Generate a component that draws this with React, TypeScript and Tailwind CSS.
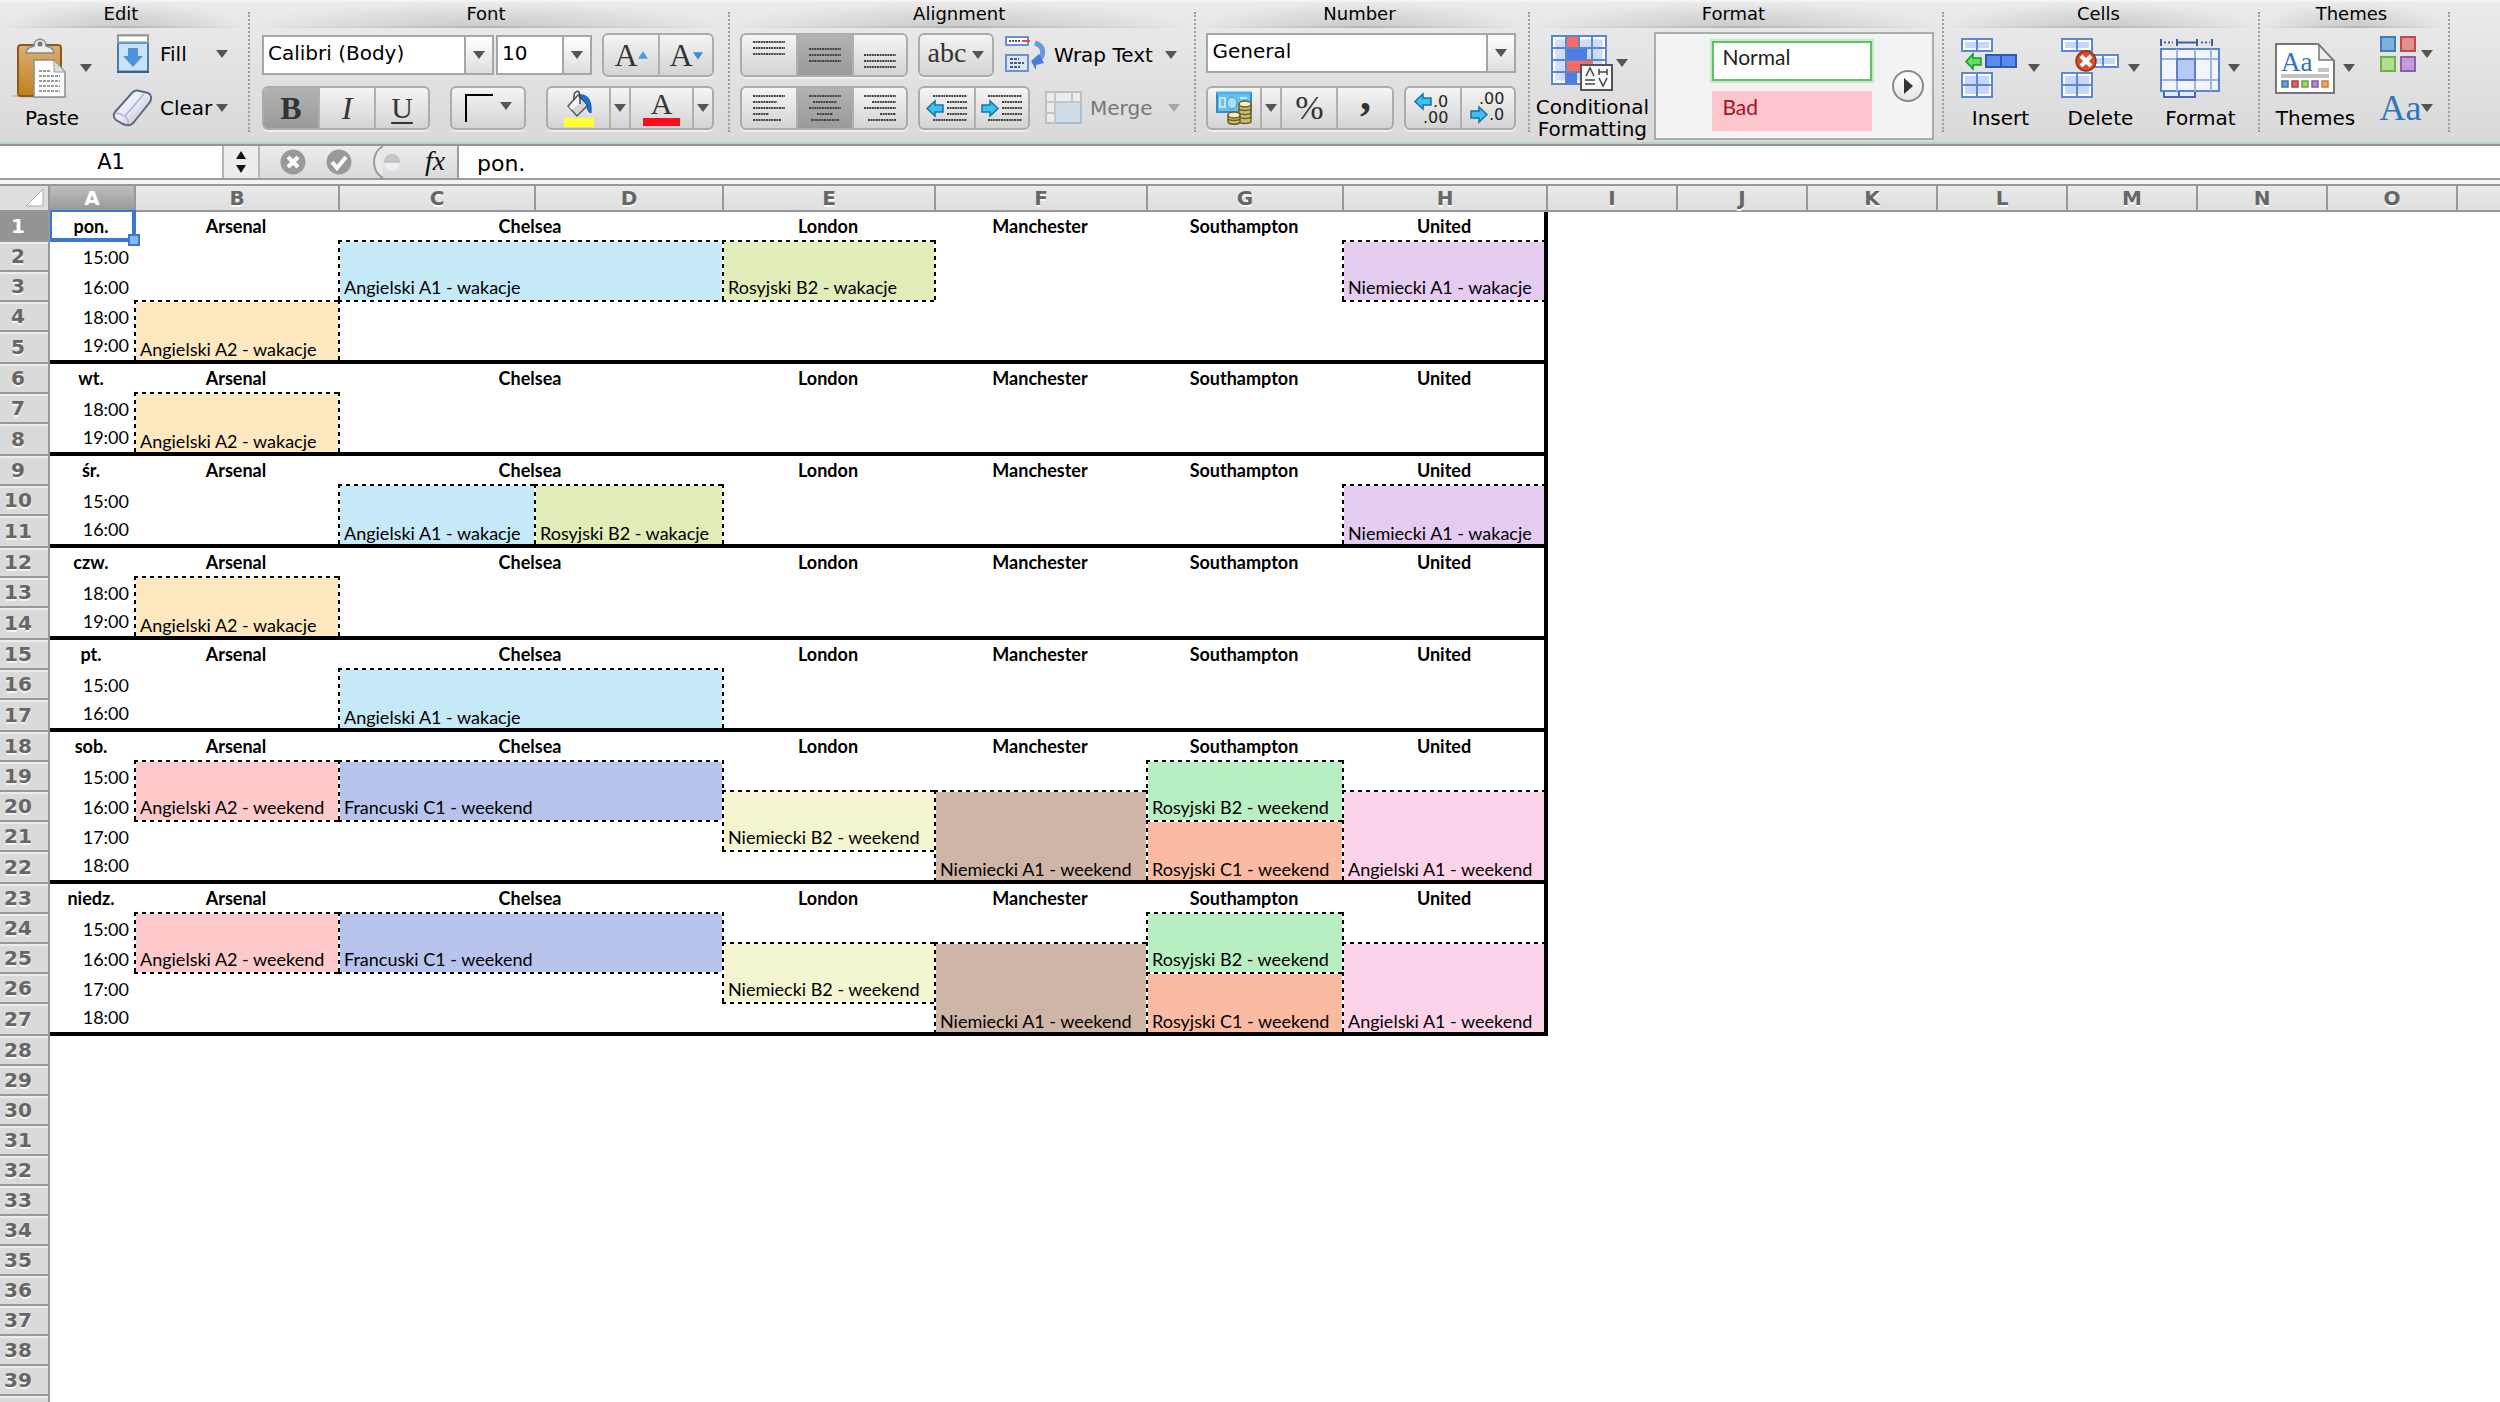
import type { ReactNode } from "react";
import clsx from "clsx";

type Course = {
  row: number;
  span: number;
  col: number;
  colSpan?: number;
  text: string;
  color: string;
};

type Day = {
  name: string;
  times: string[];
  courses: Course[];
};

const CYAN = "bg-[#c6e9f8]";
const LIME = "bg-[#e0edb8]";
const VIOLET = "bg-[#e4ccf1]";
const SAND = "bg-[#fde8c0]";
const ROSE = "bg-[#fdc9cb]";
const INDIGO = "bg-[#b8c3ec]";
const CREAM = "bg-[#f5f5d2]";
const BROWN = "bg-[#ceb5a6]";
const MINT = "bg-[#b7efc0]";
const CORAL = "bg-[#fbbaa2]";
const PINK = "bg-[#fdd3ea]";

const weekend: Course[] = [
  { row: 0, span: 2, col: 1, text: "Angielski A2 - weekend", color: ROSE },
  { row: 0, span: 2, col: 2, colSpan: 2, text: "Francuski C1 - weekend", color: INDIGO },
  { row: 1, span: 2, col: 4, text: "Niemiecki B2 - weekend", color: CREAM },
  { row: 1, span: 3, col: 5, text: "Niemiecki A1 - weekend", color: BROWN },
  { row: 0, span: 2, col: 6, text: "Rosyjski B2 - weekend", color: MINT },
  { row: 2, span: 2, col: 6, text: "Rosyjski C1 - weekend", color: CORAL },
  { row: 1, span: 3, col: 7, text: "Angielski A1 - weekend", color: PINK },
];

const days: Day[] = [
  {
    name: "pon.",
    times: ["15:00", "16:00", "18:00", "19:00"],
    courses: [
      { row: 0, span: 2, col: 2, colSpan: 2, text: "Angielski A1 - wakacje", color: CYAN },
      { row: 0, span: 2, col: 4, text: "Rosyjski B2 - wakacje", color: LIME },
      { row: 0, span: 2, col: 7, text: "Niemiecki A1 - wakacje", color: VIOLET },
      { row: 2, span: 2, col: 1, text: "Angielski A2 - wakacje", color: SAND },
    ],
  },
  {
    name: "wt.",
    times: ["18:00", "19:00"],
    courses: [{ row: 0, span: 2, col: 1, text: "Angielski A2 - wakacje", color: SAND }],
  },
  {
    name: "śr.",
    times: ["15:00", "16:00"],
    courses: [
      { row: 0, span: 2, col: 2, text: "Angielski A1 - wakacje", color: CYAN },
      { row: 0, span: 2, col: 3, text: "Rosyjski B2 - wakacje", color: LIME },
      { row: 0, span: 2, col: 7, text: "Niemiecki A1 - wakacje", color: VIOLET },
    ],
  },
  {
    name: "czw.",
    times: ["18:00", "19:00"],
    courses: [{ row: 0, span: 2, col: 1, text: "Angielski A2 - wakacje", color: SAND }],
  },
  {
    name: "pt.",
    times: ["15:00", "16:00"],
    courses: [{ row: 0, span: 2, col: 2, colSpan: 2, text: "Angielski A1 - wakacje", color: CYAN }],
  },
  { name: "sob.", times: ["15:00", "16:00", "17:00", "18:00"], courses: weekend },
  { name: "niedz.", times: ["15:00", "16:00", "17:00", "18:00"], courses: weekend },
];

const columns = [
  { letter: "A", width: "w-[86px]" },
  { letter: "B", width: "w-[204px]" },
  { letter: "C", width: "w-[196px]" },
  { letter: "D", width: "w-[188px]" },
  { letter: "E", width: "w-[212px]" },
  { letter: "F", width: "w-[212px]" },
  { letter: "G", width: "w-[196px]" },
  { letter: "H", width: "w-[204px]" },
  { letter: "I", width: "w-[130px]" },
  { letter: "J", width: "w-[130px]" },
  { letter: "K", width: "w-[130px]" },
  { letter: "L", width: "w-[130px]" },
  { letter: "M", width: "w-[130px]" },
  { letter: "N", width: "w-[130px]" },
  { letter: "O", width: "w-[130px]" },
];

const rooms = ["Arsenal", "Chelsea", "London", "Manchester", "Southampton", "United"];

/* ---------- ribbon pieces ---------- */

function Caret({ faded = false }: { faded?: boolean }) {
  return (
    <svg width="12" height="8" viewBox="0 0 12 8" className={clsx("shrink-0", faded && "opacity-40")}>
      <path d="M0 0h12L6 8z" fill="#555" />
    </svg>
  );
}

function Separator() {
  return <div className="my-2.5 w-0 shrink-0 border-l-2 border-dotted border-[#9d9d9d]" />;
}

function Group({ title, className, children }: { title: string; className?: string; children: ReactNode }) {
  return (
    <section className="flex shrink-0 flex-col" aria-label={title}>
      <h2 className="h-6 bg-[radial-gradient(ellipse_at_bottom,#cbcbcb,transparent_70%)] pr-1.5 text-center text-lg leading-6">
        {title}
      </h2>
      <div className="h-0.5 bg-linear-to-r from-transparent via-[#b4b4b4] to-transparent" />
      <div className={clsx("flex", className)}>{children}</div>
    </section>
  );
}

function Segments({ children }: { children: ReactNode }) {
  return (
    <div className="flex h-11 shrink-0 rounded-md border-2 border-[#acacac] bg-linear-to-b from-[#f5f5f5] to-[#d3d3d3] shadow-[0_2px_0_#eeeeee]">
      {children}
    </div>
  );
}

function Segment({
  label,
  width,
  active = false,
  children,
}: {
  label: string;
  width: string;
  active?: boolean;
  children: ReactNode;
}) {
  return (
    <button
      type="button"
      aria-label={label}
      aria-pressed={active}
      className={clsx(
        "flex items-center justify-center border-l-2 border-[#b0b0b0] font-['Liberation_Serif',serif] text-[#333] first:rounded-l-sm first:border-l-0",
        active && "bg-linear-to-b from-[#b2b2b2] to-[#9a9a9a]",
        width,
      )}
    >
      {children}
    </button>
  );
}

function Combo({ label, value, width }: { label: string; value: string; width: string }) {
  return (
    <div className={clsx("relative h-10 shrink-0 border-2 border-[#a6a6a6] bg-white", width)}>
      <select aria-label={label} className="h-full w-full appearance-none pb-1 pl-1 text-xl outline-none">
        <option>{value}</option>
      </select>
      <span className="pointer-events-none absolute inset-y-0 right-0 flex w-7 items-center justify-center border-l-2 border-[#a6a6a6] bg-linear-to-b from-white to-[#dedede]">
        <Caret />
      </span>
    </div>
  );
}

function BigButton({ label, children }: { label: string; children: ReactNode }) {
  return (
    <button type="button" className="flex w-20 flex-col items-center gap-1.5 pt-2 text-xl leading-6">
      <span className="flex h-16 w-full items-center justify-between">
        {children}
        <Caret />
      </span>
      {label}
    </button>
  );
}

// Horizontal strokes as [x, y, length]
function Lines({ lines }: { lines: number[][] }) {
  return (
    <svg width="40" height="36" viewBox="0 0 40 36" stroke="#444" strokeWidth="2" strokeDasharray="2 0.6">
      {lines.map(([x, y, len]) => (
        <path key={`${x}-${y}`} d={`M${x} ${y}h${len}`} />
      ))}
    </svg>
  );
}

const ARROW_LEFT = "M0 7.500L8 0v4h8v7H8v4z";
const ARROW_RIGHT = "M16 7.500L8 0v4H0v7h8v4z";

function BlueArrow({ d, x, y }: { d: string; x: number; y: number }) {
  return <path d={d} transform={`translate(${x} ${y})`} fill="#3dc1f3" stroke="#1374a6" strokeWidth="1.500" />;
}

function PasteIcon() {
  return (
    <svg width="56" height="64" viewBox="0 0 56 64">
      <defs>
        <linearGradient id="board" x1="0" y1="0" x2="0" y2="1">
          <stop offset="0" stopColor="#dcae78" />
          <stop offset="1" stopColor="#bd8216" />
        </linearGradient>
      </defs>
      <ellipse cx="28" cy="60" rx="28" ry="2" fill="#aaa" opacity="0.6" />
      <rect x="6" y="9" width="43" height="51" rx="3" fill="url(#board)" stroke="#8a5a1c" strokeWidth="2" />
      <path d="M14 17c0-4 4-6 8-7 0-9 12-9 12 0 4 1 8 3 8 7z" fill="#eee" stroke="#888" strokeWidth="1.500" />
      <circle cx="28" cy="8" r="2.500" fill="#777" />
      <path d="M22 24h20l11 12v25H22z" fill="#fff" stroke="#8c8c8c" strokeWidth="1.500" />
      <path d="M42 24v12h11z" fill="#ddd" stroke="#999" />
      <path d="M27 35h11M27 40h21M27 45h21M27 50h21M27 55h21" stroke="#9a9a9a" strokeWidth="2" strokeDasharray="3 1" />
    </svg>
  );
}

function FillIcon() {
  return (
    <svg width="40" height="40" viewBox="0 0 40 40">
      <rect x="6" y="1.500" width="30" height="36" fill="#c9e2f8" stroke="#4a7cab" strokeWidth="2" />
      <path d="M6 1.500h30v7H6z" fill="#fff" stroke="#999" strokeWidth="2" />
      <path d="M7 9h28" stroke="#5b9bd2" strokeWidth="2" />
      <path d="M16 14h10v8h5L21 33 11 22h5z" fill="#4d95da" />
      <path d="M5 38h32" stroke="#35618a" strokeWidth="2" />
    </svg>
  );
}

function EraserIcon() {
  return (
    <svg width="40" height="40" viewBox="0 0 40 40">
      <defs>
        <linearGradient id="eraser" x1="0" y1="0" x2="1" y2="1">
          <stop offset="0" stopColor="#fff" />
          <stop offset="0.500" stopColor="#e6e9f5" />
          <stop offset="1" stopColor="#a9b3d2" />
        </linearGradient>
      </defs>
      <path
        d="M3 24 20 5c2-3 5-3 8-2l8 2c3 1 4 5 2 9L22 34c-3 4-7 4-11 2l-7-4c-2-2-3-5-1-8z"
        fill="url(#eraser)"
        stroke="#5d6880"
        strokeWidth="2"
      />
      <path d="M3 26c3-2 6 0 9 2s5 4 4 8M13 28 32 6" fill="none" stroke="#aab3cc" strokeWidth="1.500" />
    </svg>
  );
}

function BucketIcon() {
  return (
    <svg width="30" height="38" viewBox="0 0 30 38">
      <path d="M4 17 14 6l10 10-11 11z" fill="#d5d5d5" stroke="#555" strokeWidth="1.500" />
      <path d="M5 18 14 8l4 4-10 9z" fill="#f7f7f7" />
      <path d="M10 11c-1-10 6-12 6-3v7" fill="none" stroke="#444" strokeWidth="1.500" />
      <path d="M15 6c8-1 13 4 12 18-3-1-4-4-4-8z" fill="#1f6fd0" stroke="#124a94" />
      <rect x="0" y="29" width="30" height="9" fill="#ffff33" />
    </svg>
  );
}

function WrapIcon() {
  return (
    <svg width="42" height="40" viewBox="0 0 42 40">
      <rect x="2" y="2" width="22" height="8" fill="#fff" stroke="#6e8fc9" strokeWidth="2" />
      <path d="M5 6h12" stroke="#555" strokeWidth="2" strokeDasharray="2 1" />
      <path d="M18 6h8" stroke="#f2413a" strokeWidth="2" />
      <rect x="2" y="20" width="22" height="16" fill="#d9e5f8" stroke="#6e8fc9" strokeWidth="2" />
      <path d="M6 24h9M6 28h14M6 32h10" stroke="#4a5a80" strokeWidth="2" strokeDasharray="3 1" />
      <path d="M31 8c10 3 9 12 4 17" fill="none" stroke="#6a97e0" strokeWidth="5" />
      <path d="M27 26l8-7 5 9-8 2v5z" fill="#4a7bd6" />
    </svg>
  );
}

function MergeIcon() {
  return (
    <svg width="40" height="36" viewBox="0 0 40 36" strokeWidth="2">
      <path d="M2 2h35v31H2z" fill="#ececec" stroke="#bfbfbf" />
      <path d="M11 12h26v21H11z" fill="#cfdde9" stroke="#a8c0d4" />
      <path d="M2 12h35M11 2v31M28 2v10M2 23h9" stroke="#c6c6c6" fill="none" />
    </svg>
  );
}

function CurrencyIcon() {
  return (
    <svg width="38" height="36" viewBox="0 0 38 36">
      <rect x="2" y="3" width="34" height="19" fill="#6cc1ea" stroke="#2f8fc6" strokeWidth="2" />
      <path d="M2 3h34" stroke="#4cb2f2" strokeWidth="3" />
      <ellipse cx="17" cy="13" rx="5" ry="6" fill="#a9def5" stroke="#3b93c0" />
      <path d="M5 8h5v9H5zM25 8h7" fill="none" stroke="#d6f0fb" strokeWidth="1.500" />
      <g fill="#cbbb73" stroke="#6e5f26" strokeWidth="1.500">
        <path d="M24 14v18c2 2 10 2 12 0V14z" />
        <ellipse cx="30" cy="14" rx="6" ry="3" fill="#f7efc4" />
        <path d="M24 19c2 2 10 2 12 0M24 23c2 2 10 2 12 0M24 27c2 2 10 2 12 0" fill="none" />
        <path d="M13 25v7c2 3 10 3 12 0v-7z" />
        <ellipse cx="19" cy="25" rx="6" ry="3" fill="#f7efc4" />
        <path d="M13 29c2 2 10 2 12 0" fill="none" />
      </g>
    </svg>
  );
}

function ConditionalIcon() {
  return (
    <svg width="64" height="58" viewBox="0 0 64 58">
      <rect x="2" y="2" width="54" height="48" fill="#cfdcf7" />
      <path d="M4 4h50v44H4z" fill="none" stroke="#fff" strokeWidth="3" />
      <rect x="16" y="2" width="13" height="12" fill="#fa6a60" />
      <rect x="16" y="14" width="21" height="12" fill="#4f7ce3" />
      <rect x="16" y="26" width="27" height="12" fill="#fa6a60" />
      <rect x="16" y="38" width="11" height="12" fill="#4f7ce3" />
      <path d="M2 14h54M2 26h54M2 38h54M16 2v48M29 2v12M42 2v24" stroke="#5886d0" strokeWidth="2" />
      <rect x="2" y="2" width="54" height="48" fill="none" stroke="#5886d0" strokeWidth="2" />
      <rect x="31" y="31" width="31" height="25" fill="#f8f8f8" stroke="#555" strokeWidth="2" />
      <path
        d="m36 42 4-8 4 8M35 46h10M35 50h10M49 35v6M57 35v6M49 38h8M49 44l4 8 4-8"
        fill="none"
        stroke="#444"
        strokeWidth="1.500"
      />
    </svg>
  );
}

function CellPair({ x, y, dark = false, rows = 1 }: { x: number; y: number; dark?: boolean; rows?: number }) {
  const h = rows * 12;
  return (
    <g stroke={dark ? "#2f59b5" : "#5b88d2"} strokeWidth="2">
      <rect x={x} y={y} width="30" height={h} fill={dark ? "#5c8bf0" : "#fff"} />
      {!dark && <rect x={x + 3} y={y + 3} width="24" height={h - 6} fill="#c6d7f8" stroke="none" />}
      <path d={`M${x + 15} ${y}v${h}${rows > 1 ? `M${x} ${y + 12}h30` : ""}`} />
    </g>
  );
}

function InsertIcon() {
  return (
    <svg width="60" height="64" viewBox="0 0 60 64">
      <CellPair x={2} y={3} />
      <CellPair x={26} y={19} dark />
      <CellPair x={2} y={37} rows={2} />
      <path d="M6 25.500 13 18v4h8v7h-8v4z" fill="#5fe065" stroke="#13992a" strokeWidth="1.500" />
    </svg>
  );
}

function DeleteIcon() {
  return (
    <svg width="60" height="64" viewBox="0 0 60 64">
      <CellPair x={2} y={3} />
      <CellPair x={28} y={19} />
      <CellPair x={2} y={37} rows={2} />
      <circle cx="26" cy="25" r="10" fill="#d4502a" stroke="#97300f" strokeWidth="1.500" />
      <path d="m21 20 10 10m0-10L21 30" stroke="#fff" strokeWidth="4" />
    </svg>
  );
}

function FormatIcon() {
  return (
    <svg width="60" height="64" viewBox="0 0 60 64">
      <path d="M1 3v7M52 3v7M17 3v7M37 3v7M16 6.500h22" stroke="#3d5f9f" strokeWidth="2" />
      <path d="M4 6.500h9M41 6.500h9" stroke="#3d5f9f" strokeWidth="2" strokeDasharray="2 2" />
      <path d="M4 54v7h15v-7M19 54v7h16v-7" fill="#e4ebf8" stroke="#4a69a8" strokeWidth="2" />
      <rect x="1" y="13" width="58" height="42" fill="#f2f5fd" stroke="#5d83cf" strokeWidth="2" />
      <rect x="18" y="24" width="17" height="20" fill="#b5c9f3" />
      <path d="M2 23h56M2 44h56M17 13v42M35 13v42M51 13v42" stroke="#9fb4de" strokeWidth="2" />
      <path d="M17 23h18v21H17z" fill="none" stroke="#5d80c6" strokeWidth="2" />
    </svg>
  );
}

function ThemesIcon() {
  return (
    <svg width="60" height="64" viewBox="0 0 60 64">
      <path d="M1 8h42l16 17v32H1z" fill="#fff" stroke="#777" strokeWidth="2" />
      <path d="M44 9v15h14z" fill="#eee" stroke="#777" strokeWidth="1.500" />
      <text x="6" y="35" fontSize="27" fill="#2f75bd" fontFamily="'Liberation Serif', serif">
        Aa
      </text>
      <path d="M43 34h11M6 40h48" stroke="#c4c4c4" strokeWidth="4" />
      <g strokeWidth="1.500">
        <path d="M7 45h6v6H7z" fill="#6aa2d6" stroke="#3a75ad" />
        <path d="M17 45h6v6h-6z" fill="#dd6667" stroke="#b83c40" />
        <path d="M27 45h6v6h-6z" fill="#a0d37c" stroke="#67a83e" />
        <path d="M37 45h6v6h-6z" fill="#b98bd0" stroke="#8b55a8" />
        <path d="M47 45h6v6h-6z" fill="#f0a56a" stroke="#cf7a36" />
      </g>
    </svg>
  );
}

function SwatchIcon() {
  return (
    <svg width="38" height="38" viewBox="0 0 38 38" strokeWidth="2">
      <path d="M2 2h14v14H2z" fill="#7db0de" stroke="#3f7db5" />
      <path d="M22 2h14v14H22z" fill="#e58e90" stroke="#bf4a4e" />
      <path d="M2 22h14v14H2z" fill="#b2de93" stroke="#6fae48" />
      <path d="M22 22h14v14H22z" fill="#c29fd8" stroke="#8f5cae" />
    </svg>
  );
}

function Ribbon() {
  return (
    <header className="flex h-[142px] overflow-hidden border-t-2 border-[#f3f3f3] bg-linear-to-b from-[#ebebeb] to-[#d9d9d9]">
      <Group title="Edit" className="pr-5 pl-3">
        <BigButton label="Paste">
          <PasteIcon />
        </BigButton>
        <div className="ml-5 flex flex-col gap-3.5 pt-1.5">
          <button type="button" className="flex h-10 items-center text-xl">
            <FillIcon />
            <span className="w-16 pl-2 text-left">Fill</span>
            <Caret />
          </button>
          <button type="button" className="flex h-10 items-center text-xl">
            <EraserIcon />
            <span className="w-16 pl-2 text-left">Clear</span>
            <Caret />
          </button>
        </div>
      </Group>
      <Separator />

      <Group title="Font" className="flex-col gap-[9px] pt-[5px] pr-3.5 pl-3">
        <div className="flex items-center">
          <Combo label="Font" value="Calibri (Body)" width="w-[232px]" />
          <div className="mr-2.5 ml-0.5">
            <Combo label="Font size" value="10" width="w-24" />
          </div>
          <Segments>
            <Segment label="Increase font size" width="w-[54px]">
              <span className="text-[32px] leading-8">A</span>
              <svg width="10" height="9" viewBox="0 0 12 10">
                <path d="M6 0l6 9H0z" fill="#4d9ce0" />
              </svg>
            </Segment>
            <Segment label="Decrease font size" width="w-[54px]">
              <span className="text-[32px] leading-8">A</span>
              <svg width="10" height="9" viewBox="0 0 12 10">
                <path d="M6 10l6-9H0z" fill="#3b8bdc" />
              </svg>
            </Segment>
          </Segments>
        </div>
        <div className="flex justify-between">
          <Segments>
            <Segment label="Bold" width="w-[54px]" active>
              <span className="text-[32px] leading-8 font-bold">B</span>
            </Segment>
            <Segment label="Italic" width="w-14">
              <span className="text-[32px] leading-8 italic">I</span>
            </Segment>
            <Segment label="Underline" width="w-[54px]">
              <span className="text-3xl leading-8 underline decoration-2 underline-offset-4">U</span>
            </Segment>
          </Segments>
          <Segments>
            <Segment label="Borders" width="w-[72px]">
              <svg width="48" height="30" viewBox="0 0 48 30">
                <path d="M2 29V2h27" fill="none" stroke="#000" strokeWidth="2" />
                <path d="M36 9h12l-6 8z" fill="#555" />
              </svg>
            </Segment>
          </Segments>
          <Segments>
            <Segment label="Fill color" width="w-[61px]">
              <BucketIcon />
            </Segment>
            <Segment label="Fill color menu" width="w-5">
              <Caret />
            </Segment>
            <Segment label="Font color" width="w-[63px]">
              <span className="border-b-8 border-[#fc0d1b] px-2 text-3xl leading-7">A</span>
            </Segment>
            <Segment label="Font color menu" width="w-5">
              <Caret />
            </Segment>
          </Segments>
        </div>
      </Group>
      <Separator />

      <Group title="Alignment" className="flex-col gap-[9px] pt-[5px] pr-3.5 pl-2.5">
        <div className="flex items-center gap-2.5">
          <Segments>
            <Segment label="Align top" width="w-[54px]">
              <Lines lines={[[4, 5, 32], [4, 11, 32], [4, 17, 32]]} />
            </Segment>
            <Segment label="Align middle" width="w-14" active>
              <Lines lines={[[4, 12, 32], [4, 18, 32], [4, 24, 32]]} />
            </Segment>
            <Segment label="Align bottom" width="w-[54px]">
              <Lines lines={[[4, 18, 32], [4, 24, 32], [4, 30, 32]]} />
            </Segment>
          </Segments>
          <Segments>
            <Segment label="Orientation" width="w-[72px]">
              <span className="mr-1.5 pb-1 text-[28px] leading-8">abc</span>
              <Caret />
            </Segment>
          </Segments>
          <button type="button" className="flex items-center text-xl">
            <WrapIcon />
            <span className="mr-3 ml-2">Wrap Text</span>
            <Caret />
          </button>
        </div>
        <div className="flex items-center gap-2.5">
          <Segments>
            <Segment label="Align left" width="w-[54px]">
              <Lines lines={[[4, 6, 32], [4, 12, 24], [4, 18, 32], [4, 24, 16], [4, 30, 28]]} />
            </Segment>
            <Segment label="Align center" width="w-14" active>
              <Lines lines={[[4, 6, 32], [8, 12, 24], [4, 18, 32], [12, 24, 16], [6, 30, 28]]} />
            </Segment>
            <Segment label="Align right" width="w-[54px]">
              <Lines lines={[[4, 6, 32], [12, 12, 24], [4, 18, 32], [20, 24, 16], [8, 30, 28]]} />
            </Segment>
          </Segments>
          <Segments>
            <Segment label="Decrease indent" width="w-[54px]">
              <svg width="42" height="36" viewBox="0 0 42 36">
                <path d="M7 6h34M21 12h20M21 18h20M21 24h20M7 30h34" stroke="#444" strokeWidth="2" strokeDasharray="2 0.6" />
                <BlueArrow d={ARROW_LEFT} x={1} y={11} />
              </svg>
            </Segment>
            <Segment label="Increase indent" width="w-[54px]">
              <svg width="42" height="36" viewBox="0 0 42 36">
                <path d="M7 6h34M21 12h20M21 18h20M21 24h20M7 30h34" stroke="#444" strokeWidth="2" strokeDasharray="2 0.6" />
                <BlueArrow d={ARROW_RIGHT} x={1} y={11} />
              </svg>
            </Segment>
          </Segments>
          <button type="button" className="flex items-center pl-1 text-xl text-[#777]">
            <MergeIcon />
            <span className="mr-4 ml-1.5">Merge</span>
            <Caret faded />
          </button>
        </div>
      </Group>
      <Separator />

      <Group title="Number" className="flex-col gap-[9px] pt-[5px] pr-3 pl-2.5">
        <div className="flex h-11">
          <Combo label="Number format" value="General" width="w-[310px]" />
        </div>
        <div className="flex gap-2.5">
          <Segments>
            <Segment label="Currency" width="w-[52px]">
              <CurrencyIcon />
            </Segment>
            <Segment label="Currency menu" width="w-5">
              <Caret />
            </Segment>
            <Segment label="Percent style" width="w-14">
              <span className="text-[34px] leading-8">%</span>
            </Segment>
            <Segment label="Comma style" width="w-14">
              <span className="h-10 text-[44px] leading-4 font-bold">,</span>
            </Segment>
          </Segments>
          <Segments>
            <Segment label="Increase decimal" width="w-[54px]">
              <svg
                width="42"
                height="38"
                viewBox="0 0 42 38"
                className="overflow-visible"
                fontFamily="'DejaVu Sans', sans-serif"
                fontSize="16"
                fill="#222"
              >
                <BlueArrow d={ARROW_LEFT} x={3} y={5} />
                <text x="21" y="18">.0</text>
                <text x="11" y="34">.00</text>
              </svg>
            </Segment>
            <Segment label="Decrease decimal" width="w-[54px]">
              <svg
                width="42"
                height="38"
                viewBox="0 0 42 38"
                className="overflow-visible"
                fontFamily="'DejaVu Sans', sans-serif"
                fontSize="16"
                fill="#222"
              >
                <text x="12" y="15">.00</text>
                <text x="22" y="31">.0</text>
                <BlueArrow d={ARROW_RIGHT} x={4} y={18} />
              </svg>
            </Segment>
          </Segments>
        </div>
      </Group>
      <Separator />

      <Group title="Format" className="pr-2 pl-1.5">
        <button type="button" className="flex w-28 flex-col items-center pt-1.5 text-xl leading-[22px]">
          <span className="flex w-full items-center gap-0.5 pl-3.5">
            <ConditionalIcon />
            <Caret />
          </span>
          <span className="pt-1">
            Conditional
            <br />
            Formatting
          </span>
        </button>
        <div className="mt-1 ml-1.5 flex h-[108px] w-[280px] items-center border-2 border-[#acacac] bg-[#f3f3f3] font-[Lato,sans-serif] text-[21px]">
          <div className="ml-14 flex w-40 flex-col gap-2.5">
            <button
              type="button"
              className="h-10 border-2 border-[#5fc068] bg-white pb-2 pl-2 text-left leading-7 text-[#222] shadow-[0_0_0_2px_#c3ecc4]"
            >
              Normal
            </button>
            <button type="button" className="h-10 bg-[#fec6ce] pb-2 pl-2.5 text-left leading-7 text-[#a31420]">
              Bad
            </button>
          </div>
          <button
            type="button"
            aria-label="More styles"
            className="ml-5 flex size-8 items-center justify-center rounded-full border-2 border-[#888] bg-linear-to-b from-white to-[#e6e6e6]"
          >
            <svg width="9" height="16" viewBox="0 0 9 16">
              <path d="M0 0l9 8-9 8z" fill="#333" />
            </svg>
          </button>
        </div>
      </Group>
      <Separator />

      <Group title="Cells" className="gap-5 pr-[18px] pl-4">
        <BigButton label="Insert">
          <InsertIcon />
        </BigButton>
        <BigButton label="Delete">
          <DeleteIcon />
        </BigButton>
        <BigButton label="Format">
          <FormatIcon />
        </BigButton>
      </Group>
      <Separator />

      <Group title="Themes" className="gap-6 px-[15px]">
        <BigButton label="Themes">
          <ThemesIcon />
        </BigButton>
        <div className="flex flex-col gap-3.5 pt-1.5">
          <button type="button" aria-label="Theme colors" className="flex h-10 items-center gap-1">
            <SwatchIcon />
            <Caret />
          </button>
          <button
            type="button"
            aria-label="Theme fonts"
            className="flex h-10 items-center gap-1 font-['Liberation_Serif',serif] text-4xl text-[#2f75bd]"
          >
            <span className="w-[38px]">Aa</span>
            <Caret />
          </button>
        </div>
      </Group>
      <Separator />
    </header>
  );
}

function FormulaBar() {
  return (
    <div className="flex h-10 border-t-2 border-b-4 border-t-[#969696] border-b-[#f4f4f4]">
      <div className="flex flex-1 border-b-2 border-[#9c9c9c] bg-linear-to-b from-[#ececec] to-[#dadada]">
        <input
          aria-label="Name box"
          defaultValue="A1"
          className="w-[222px] bg-white pt-0.5 text-center text-[21px] outline-none"
        />
        <button
          type="button"
          aria-label="Name box menu"
          className="flex w-[38px] items-center justify-center border-x-2 border-[#b5b5b5] bg-[#ededed]"
        >
          <svg width="10" height="22" viewBox="0 0 10 22" fill="#111">
            <path d="M5 0l5 8H0zM5 22l5-8H0z" />
          </svg>
        </button>
        <div className="flex w-[199px] items-center border-r-2 border-[#9c9c9c] pl-5">
          <svg width="172" height="32" viewBox="0 0 172 32" className="overflow-visible">
            <circle cx="13" cy="16" r="12.500" fill="#999" />
            <path d="m8 11 10 10m0-10L8 21" stroke="#fff" strokeWidth="4" />
            <circle cx="59" cy="16" r="12.500" fill="#999" />
            <path d="m52 16 5 6 9-11" fill="none" stroke="#fff" strokeWidth="4" />
            <path d="M103 0c-12 7-12 25 0 32" fill="#e9e9e9" stroke="#999" strokeWidth="2" />
            <circle cx="112" cy="16" r="8" fill="#c5c6cb" />
            <path d="M104 17a8 8 0 0 0 16 0z" fill="#eeeef2" />
            <text x="145" y="24" fontSize="28" fontStyle="italic" fontFamily="'Liberation Serif', serif" fill="#111">
              fx
            </text>
          </svg>
        </div>
        <input
          aria-label="Formula"
          defaultValue="pon."
          className="flex-1 bg-white pt-0.5 pl-4.5 text-[22px] outline-none"
        />
      </div>
    </div>
  );
}

/* ---------- sheet ---------- */

const DASH_H = "h-0.5 bg-[repeating-linear-gradient(to_right,#000_0_4px,#fff_4px_8px)]";
const DASH_V = "w-0.5 bg-[repeating-linear-gradient(to_bottom,#000_0_4px,#fff_4px_8px)]";

function CourseCell({ course, last }: { course: Course; last: boolean }) {
  const edge = course.col === 7;
  return (
    <td
      rowSpan={course.span}
      colSpan={course.colSpan}
      className={clsx(
        "relative border-black pl-1 align-bottom leading-5 whitespace-nowrap",
        course.color,
        last ? "border-b-4 pb-px" : "pb-[5px]",
        edge && "border-r-4",
      )}
    >
      {course.text}
      <span className={clsx("absolute -top-0.5 right-0 -left-0.5", DASH_H)} />
      <span className={clsx("absolute -top-0.5 bottom-0 -left-0.5", DASH_V)} />
      {!last && <span className={clsx("absolute right-0 bottom-0 -left-0.5", DASH_H)} />}
      {!edge && <span className={clsx("absolute -top-0.5 right-0 bottom-0", DASH_V)} />}
    </td>
  );
}

function RowNumber({ n, tall = false }: { n: number; tall?: boolean }) {
  const active = n === 1;
  return (
    <th
      scope="row"
      className={clsx(
        "border-r-2 border-b-2 border-[#989898] p-0 pr-3 text-xl leading-6 font-bold",
        tall ? "h-8" : "h-[30px]",
        active
          ? "bg-[#949494] text-white"
          : "bg-[#dadada] text-[#666] shadow-[inset_0_2px_0_#ececec] [text-shadow:0_2px_0_#f4f4f4]",
      )}
    >
      {n}
    </th>
  );
}

function DayRows({ day, start }: { day: Day; start: number }) {
  return (
    <>
      <tr>
        <RowNumber n={start} />
        <td className="relative pr-1 pb-1.5 text-center align-bottom leading-5 font-bold">
          {day.name}
          {start === 1 && (
            <span className="absolute -top-0.5 right-0 bottom-0 left-0 border-2 border-r-4 border-b-4 border-[#3a78d8]">
              <span className="absolute -right-2 -bottom-2 z-10 size-3 border-2 border-[#3a78d8] bg-[#8ab8ee]" />
            </span>
          )}
        </td>
        {rooms.map((room) => (
          <td
            key={room}
            colSpan={room === "Chelsea" ? 2 : 1}
            className="border-black pr-1 pb-1.5 text-center align-bottom leading-5 font-bold last:border-r-4 last:pr-0"
          >
            {room}
          </td>
        ))}
      </tr>
      {day.times.map((time, r) => {
        const last = r === day.times.length - 1;
        return (
          <tr key={time}>
            <RowNumber n={start + 1 + r} tall={last} />
            <td className={clsx("border-black pr-[7px] pb-[5px] text-right align-bottom leading-5", last && "border-b-4")}>
              {time}
            </td>
            {[1, 2, 3, 4, 5, 6, 7].map((col) => {
              const course = day.courses.find((c) => c.row === r && c.col === col);
              if (course) {
                return <CourseCell key={col} course={course} last={r + course.span === day.times.length} />;
              }
              const covered = day.courses.some(
                (c) => r >= c.row && r < c.row + c.span && col >= c.col && col < c.col + (c.colSpan ?? 1),
              );
              if (covered) return null;
              return <td key={col} className={clsx("border-black", last && "border-b-4", col === 7 && "border-r-4")} />;
            })}
          </tr>
        );
      })}
    </>
  );
}

function Sheet() {
  let next = 1;
  const starts = days.map((day) => {
    const start = next;
    next += day.times.length + 1;
    return start;
  });
  const emptyRows = Array.from({ length: 12 }, (_, i) => next + i);

  return (
    <table className="w-full table-fixed border-separate border-spacing-0 bg-white font-[Lato,sans-serif] text-lg">
      <colgroup>
        <col className="w-[50px]" />
        {columns.map((c) => (
          <col key={c.letter} className={c.width} />
        ))}
        <col />
      </colgroup>
      <thead className="font-['DejaVu_Sans',sans-serif]">
        <tr>
          <td className="h-7 border-2 border-l-0 border-[#989898] bg-[#dedede] p-0">
            <svg width="18" height="18" viewBox="0 0 18 18" className="mr-1 ml-auto">
              <path d="M17 0v17H0z" fill="#fff" stroke="#aaa" />
            </svg>
          </td>
          {columns.map((c) => (
            <th
              key={c.letter}
              scope="col"
              className={clsx(
                "border-y-2 border-r-2 border-[#989898] p-0 text-xl leading-6 font-bold",
                c.letter === "A"
                  ? "bg-linear-to-b from-[#bdbdbd] to-[#999] text-white"
                  : "bg-linear-to-b from-[#eaeaea] to-[#dedede] text-[#666] [text-shadow:0_2px_0_#f8f8f8]",
              )}
            >
              {c.letter}
            </th>
          ))}
          <th className="border-y-2 border-[#989898] bg-linear-to-b from-[#eaeaea] to-[#dedede] p-0" />
        </tr>
      </thead>
      <tbody className="[&_th]:font-['DejaVu_Sans',sans-serif]">
        {days.map((day, i) => (
          <DayRows key={day.name} day={day} start={starts[i]} />
        ))}
        {emptyRows.map((n) => (
          <tr key={n}>
            <RowNumber n={n} />
          </tr>
        ))}
        <tr>
          <th className="h-[30px] border-r-2 border-[#989898] bg-[#dadada] shadow-[inset_0_2px_0_#ececec]" />
        </tr>
      </tbody>
    </table>
  );
}

export default function App() {
  return (
    <div className="h-screen overflow-hidden bg-white font-['DejaVu_Sans',sans-serif] text-black">
      <Ribbon />
      <div className="h-0.5 bg-[#b9d3bf]" />
      <FormulaBar />
      <Sheet />
    </div>
  );
}
